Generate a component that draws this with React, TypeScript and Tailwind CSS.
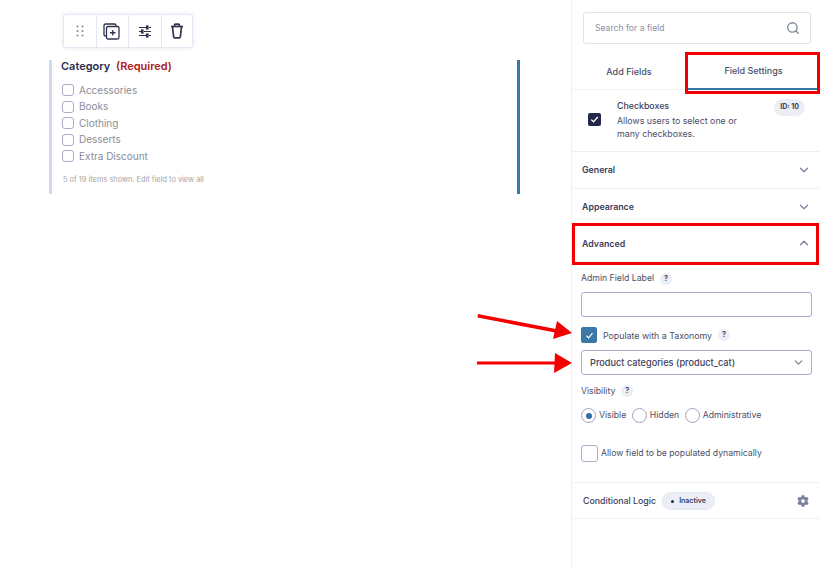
import { ChevronDown, ChevronUp, Search } from "lucide-react";
import { FaCog } from "react-icons/fa";

const font = { fontFamily: "Inter, sans-serif" };

const choices = ["Accessories", "Books", "Clothing", "Desserts", "Extra Discount"];

function Help() {
  return (
    <span className="ml-[6px] flex h-[12px] w-[12px] items-center justify-center rounded-full bg-[#eceef6] text-[7px] font-bold text-[#3a3f5c]">
      ?
    </span>
  );
}

function Radio({ label, checked }: { label: string; checked?: boolean }) {
  return (
    <div className="flex items-center gap-[3px]">
      <span className="flex h-[15px] w-[15px] items-center justify-center rounded-full border border-[#9da3bd] bg-white">
        {checked && <span className="h-[6px] w-[6px] rounded-full bg-[#2f6f9f]" />}
      </span>
      <span className="text-[8.7px] text-[#4b4f68]">{label}</span>
    </div>
  );
}

function Section({ label, open }: { label: string; open?: boolean }) {
  return (
    <div className="flex h-[36.75px] items-center justify-between border-b border-[#eef0f6] pl-[10px] pr-[9px]">
      <span className="text-[8.8px] font-semibold text-[#3c4059]">{label}</span>
      {open ? (
        <ChevronUp size={14} strokeWidth={2.2} className="text-[#7d829c]" />
      ) : (
        <ChevronDown size={14} strokeWidth={2.2} className="text-[#7d829c]" />
      )}
    </div>
  );
}

function Arrow({ className, tilt }: { className: string; tilt?: boolean }) {
  return (
    <svg className={className} width="100" height="34" viewBox="0 0 100 34" fill="#f40000">
      {tilt ? (
        <>
          <path d="M4 2 L82 17 L81 20.5 L3.5 5.5 Z" />
          <path d="M83 9 L98 21 L79 27 Z" />
        </>
      ) : (
        <>
          <rect x="3" y="14.5" width="80" height="3" />
          <path d="M81 6 L98 16 L80 26 Z" />
        </>
      )}
    </svg>
  );
}

export default function App() {
  return (
    <div className="relative flex h-[569px] w-[820px] overflow-hidden bg-white" style={font}>
      {/* Form canvas */}
      <main className="w-[571px] shrink-0 pl-[49px] pt-[14px]">
        <div className="ml-[14px] flex h-[34px] w-[130px] rounded-[3px] border border-[#e4e6f2] bg-white shadow-[0_0_4px_#e6e8f5]">
          <div className="flex w-[33px] items-center justify-center border-r border-[#e4e6f2]">
            <svg width="8" height="12" viewBox="0 0 8 12" fill="#7d829c">
              <circle cx="1.5" cy="1.5" r="1" />
              <circle cx="6.5" cy="1.5" r="1" />
              <circle cx="1.5" cy="6" r="1" />
              <circle cx="6.5" cy="6" r="1" />
              <circle cx="1.5" cy="10.5" r="1" />
              <circle cx="6.5" cy="10.5" r="1" />
            </svg>
          </div>
          <div className="flex w-[32px] items-center justify-center border-r border-[#e4e6f2] pr-[2px]">
            <svg width="17" height="17" viewBox="0 0 17 17" fill="none" stroke="#30344f" strokeWidth="1.3">
              <path d="M3 13 H2.5 A1.5 1.5 0 0 1 1 11.5 V2.5 A1.5 1.5 0 0 1 2.5 1 H11.5 A1.5 1.5 0 0 1 13 2.5 V3" />
              <rect x="3.5" y="3.5" width="12.5" height="12.5" rx="1.5" />
              <path d="M9.75 7 V12.5 M7 9.75 H12.5" />
            </svg>
          </div>
          <div className="flex w-[33px] items-center justify-center border-r border-[#e4e6f2]">
            <svg width="14" height="13" viewBox="0 0 14 13" fill="none" stroke="#30344f" strokeWidth="1.2">
              <path d="M1 2.5 H8 M11 2.5 H13 M1 6.5 H3 M6 6.5 H13 M1 10.5 H8 M11 10.5 H13" />
              <rect x="8.5" y="1" width="1.5" height="3" fill="#30344f" />
              <rect x="3.5" y="5" width="1.5" height="3" fill="#30344f" />
              <rect x="8.5" y="9" width="1.5" height="3" fill="#30344f" />
            </svg>
          </div>
          <div className="flex flex-1 items-center justify-center">
            <svg width="14" height="16" viewBox="0 0 14 16" fill="none" stroke="#30344f" strokeWidth="1.7" strokeLinejoin="round">
              <path d="M1 3.5 H13" />
              <path d="M4.5 3.5 V2.4 A1.2 1.2 0 0 1 5.7 1.2 H8.3 A1.2 1.2 0 0 1 9.5 2.4 V3.5" />
              <path d="M2.5 3.5 L3.6 13.6 A1.3 1.3 0 0 0 4.9 14.8 H9.1 A1.3 1.3 0 0 0 10.4 13.6 L11.5 3.5" />
            </svg>
          </div>
        </div>

        <div className="mt-[12px] flex h-[134px] w-[471px] flex-col border-l-[3px] border-r-[3px] border-l-[#d5d8ec] border-r-[#3a78a8] pl-[9px]">
          <div className="mt-[-1px] text-[11px] font-semibold leading-[14px] text-[#2a2e4d]">
            Category <span className="ml-[3px] text-[#b02020]">(Required)</span>
          </div>
          <div className="mt-[9px] flex flex-col pl-[1px]">
            {choices.map((choice) => (
              <div key={choice} className="flex h-[16.5px] items-center gap-[5px]">
                <span className="h-[12px] w-[12px] rounded-[3px] border border-[#a9aecb] bg-white" />
                <span className="text-[10px] text-[#8a8d9a]">{choice}</span>
              </div>
            ))}
          </div>
          <div className="mt-[9px] pl-[2px] text-[7.4px] text-[#a5a5a8]">5 of 19 items shown. Edit field to view all</div>
        </div>
      </main>

      {/* Sidebar */}
      <aside className="flex-1 border-l border-[#eef0f6]">
        <div className="pl-[11px] pr-[9px] pt-[12px]">
          <div className="flex h-[32px] items-center justify-between rounded-[3px] border border-[#dfe2ee] pl-[11px] pr-[10px]">
            <span className="text-[8.6px] text-[#8d90a3]">Search for a field</span>
            <Search size={14} strokeWidth={2.2} className="text-[#7d829c]" />
          </div>
        </div>

        <div className="mt-[8px] flex h-[38px]">
          <div className="flex w-[114px] items-center justify-center border-b border-[#eef0f6] pt-[2px] text-[9px] font-medium text-[#4a4e68]">
            Add Fields
          </div>
          <div className="flex flex-1 items-center justify-center border-b-[2.5px] border-[#3a78a8] pl-[1px] pt-[2px] text-[9px] font-medium text-[#4a4e68]">
            Field Settings
          </div>
        </div>

        <div className="relative flex h-[62px] border-b border-[#eef0f6] pl-[16px] pt-[9px]">
          <span className="mt-[14px] flex h-[13px] w-[13px] items-center justify-center rounded-[2px] bg-[#23274a]">
            <svg width="9" height="9" viewBox="0 0 9 9" fill="none" stroke="#fff" strokeWidth="1.3">
              <path d="M1.2 4.6 L3.5 6.8 L7.8 2" />
            </svg>
          </span>
          <div className="ml-[16px]">
            <div className="text-[8.8px] font-medium leading-[13px] text-[#3c4059]">Checkboxes</div>
            <div className="mt-[2px] w-[130px] text-[8.8px] leading-[13px] text-[#4b4f68]">
              Allows users to select one or many checkboxes.
            </div>
          </div>
          <span className="absolute right-[15px] top-[9px] rounded-full bg-[#eceef6] px-[6px] py-[3px] text-[7px] font-bold text-[#3a3f5c]">
            ID: 10
          </span>
        </div>

        <Section label="General" />
        <Section label="Appearance" />
        <Section label="Advanced" open />

        <div className="border-b border-[#eef0f6] pl-[9px] pr-[8px] pt-[10px]">
          <div className="flex h-[13px] items-center text-[8.7px] text-[#4b4f68]">
            Admin Field Label
            <Help />
          </div>
          <div className="mt-[7px] h-[25px] rounded-[3px] border border-[#a9aecb] bg-white" />
          <div className="mt-[10px] flex items-center">
            <span className="flex h-[16px] w-[16px] items-center justify-center rounded-[2px] bg-[#3a78a8]">
              <svg width="9" height="9" viewBox="0 0 9 9" fill="none" stroke="#fff" strokeWidth="1.2">
                <path d="M1.5 4.8 L3.6 6.8 L7.5 2.2" />
              </svg>
            </span>
            <span className="ml-[6px] text-[8.8px] text-[#4b4f68]">Populate with a Taxonomy</span>
            <Help />
          </div>
          <div className="mt-[7px] flex h-[25px] items-center justify-between rounded-[3px] border border-[#a9aecb] pl-[8px] pr-[6px] text-[9.2px] font-medium text-[#3c4059]">
            Product categories (product_cat)
            <ChevronDown size={13} strokeWidth={2.2} className="text-[#7d829c]" />
          </div>
          <div className="mt-[10px] flex h-[12px] items-center text-[8.7px] text-[#4b4f68]">
            Visibility
            <Help />
          </div>
          <div className="mt-[11px] flex gap-[5.5px]">
            <Radio label="Visible" checked />
            <Radio label="Hidden" />
            <Radio label="Administrative" />
          </div>
          <div className="mb-[20px] mt-[22px] flex items-center">
            <span className="h-[17px] w-[17px] rounded-[3px] border border-[#a9aecb]" />
            <span className="ml-[3px] text-[8.7px] text-[#4b4f68]">Allow field to be populated dynamically</span>
          </div>
        </div>

        <div className="flex h-[36px] items-center justify-between border-b border-[#eef0f6] px-[11px]">
          <div className="flex items-center">
            <span className="text-[8.8px] font-medium text-[#3c4059]">Conditional Logic</span>
            <span className="ml-[6px] flex h-[18px] items-center gap-[5px] rounded-full border border-[#e4e6f2] bg-[#eceef6] px-[8px] pt-[1px] text-[7px] font-semibold text-[#3a3f5c]">
              <span className="h-[3px] w-[3px] rounded-full bg-[#23274a]" />
              Inactive
            </span>
          </div>
          <FaCog size={12} className="text-[#7d829c]" />
        </div>
      </aside>

      {/* Annotations drawn over the screenshot */}
      <div className="absolute left-[685px] top-[52px] h-[42px] w-[135px] border-[3px] border-[#f00000]" />
      <div className="absolute left-[572px] top-[223px] h-[42px] w-[247px] border-[3px] border-[#f00000]" />
      <Arrow tilt className="absolute left-[474px] top-[312px]" />
      <Arrow className="absolute left-[474px] top-[347px]" />
    </div>
  );
}
